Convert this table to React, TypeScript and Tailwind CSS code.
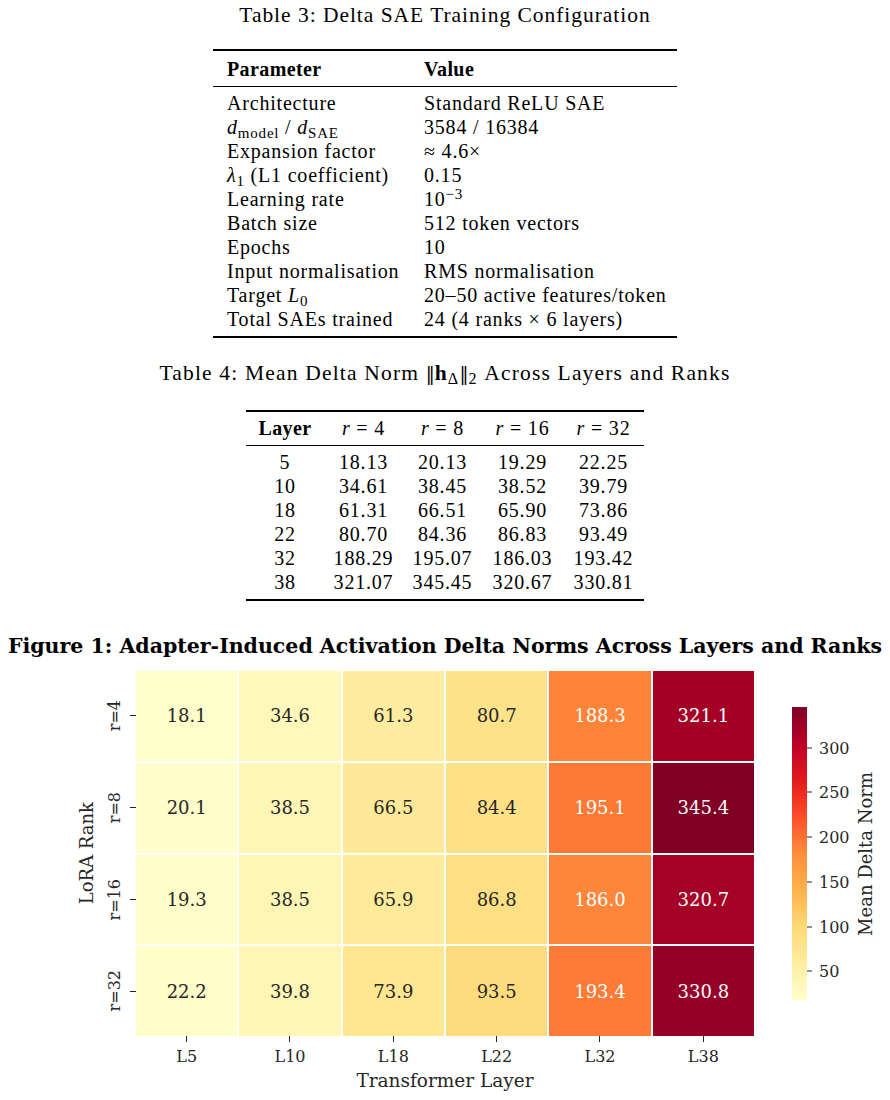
import React from 'react';

const YLORRD = ['#ffffcc', '#ffeda0', '#fed976', '#feb24c', '#fd8d3c', '#fc4e2a', '#e31a1c', '#bd0026', '#800026'];
const VMIN = 18.13;
const VMAX = 345.45;

const rgb = (h: string) => [1, 3, 5].map((i) => parseInt(h.slice(i, i + 2), 16));

const cmap = (v: number) => {
  const t = Math.min(1, Math.max(0, (v - VMIN) / (VMAX - VMIN)));
  const x = t * (YLORRD.length - 1);
  const i = Math.min(Math.floor(x), YLORRD.length - 2);
  const f = x - i;
  const a = rgb(YLORRD[i]);
  const b = rgb(YLORRD[i + 1]);
  const c = a.map((n, k) => Math.round(n + (b[k] - n) * f));
  return `rgb(${c[0]},${c[1]},${c[2]})`;
};

const config: [React.ReactNode, React.ReactNode][] = [
  ['Architecture', 'Standard ReLU SAE'],
  [
    <>
      <i>d</i>
      <sub>model</sub> / <i>d</i>
      <sub>SAE</sub>
    </>,
    '3584 / 16384',
  ],
  ['Expansion factor', '≈ 4.6×'],
  [
    <>
      <i>λ</i>
      <sub>1</sub> (L1 coefficient)
    </>,
    '0.15',
  ],
  [
    'Learning rate',
    <>
      10<sup>−3</sup>
    </>,
  ],
  ['Batch size', '512 token vectors'],
  ['Epochs', '10'],
  ['Input normalisation', 'RMS normalisation'],
  [
    <>
      Target <i>L</i>
      <sub>0</sub>
    </>,
    '20–50 active features/token',
  ],
  ['Total SAEs trained', '24 (4 ranks × 6 layers)'],
];

const norms = [
  ['5', '18.13', '20.13', '19.29', '22.25'],
  ['10', '34.61', '38.45', '38.52', '39.79'],
  ['18', '61.31', '66.51', '65.90', '73.86'],
  ['22', '80.70', '84.36', '86.83', '93.49'],
  ['32', '188.29', '195.07', '186.03', '193.42'],
  ['38', '321.07', '345.45', '320.67', '330.81'],
];

const ranks = ['4', '8', '16', '32'];
const layers = ['L5', 'L10', 'L18', 'L22', 'L32', 'L38'];

const heat: { v: number; label: string }[][] = [
  [[18.13, '18.1'], [34.61, '34.6'], [61.31, '61.3'], [80.7, '80.7'], [188.29, '188.3'], [321.07, '321.1']],
  [[20.13, '20.1'], [38.45, '38.5'], [66.51, '66.5'], [84.36, '84.4'], [195.07, '195.1'], [345.45, '345.4']],
  [[19.29, '19.3'], [38.52, '38.5'], [65.9, '65.9'], [86.83, '86.8'], [186.03, '186.0'], [320.67, '320.7']],
  [[22.25, '22.2'], [39.79, '39.8'], [73.86, '73.9'], [93.49, '93.5'], [193.42, '193.4'], [330.81, '330.8']],
].map((row) => row.map(([v, label]) => ({ v: v as number, label: label as string })));

const colWidths = ['w-[78px]', 'w-[79px]', 'w-[79px]', 'w-[81px]', 'w-[81px]'];

// double bar for the norm, Liberation Serif lacks a good one
const Bars = () => <span className="font-['DejaVu_Serif',serif] text-[18px] tracking-normal">‖</span>;

const Heatmap = () => (
  <div className="font-['DejaVu_Serif',serif] text-[#262626]">
    <div className="flex items-center pl-[76px]">
      <div className="[writing-mode:vertical-rl] rotate-180 text-[18px] leading-[22px]">LoRA Rank</div>
      <div className="ml-[6px] grid h-[365px] grid-rows-4 gap-[2px]">
        {ranks.map((r) => (
          <div key={r} className="flex items-center">
            <span className="[writing-mode:vertical-rl] rotate-180 text-[16px] leading-[22px]">r={r}</span>
            <span className="ml-[4px] h-px w-[6px] bg-[#262626]" />
          </div>
        ))}
      </div>
      <div className="grid h-[365px] w-[618px] grid-cols-6 grid-rows-4 gap-[2px] bg-white">
        {heat.flat().map((c, i) => (
          <div
            key={i}
            className={`flex items-center justify-center text-[18px] ${c.v > 150 ? 'text-white' : 'text-[#262626]'}`}
            style={{ backgroundColor: cmap(c.v) }}
          >
            {c.label}
          </div>
        ))}
      </div>
      <div className="ml-[38px] flex items-start">
        <div className="relative h-[293px] w-[15px] bg-[linear-gradient(to_top,#ffffcc,#ffeda0,#fed976,#feb24c,#fd8d3c,#fc4e2a,#e31a1c,#bd0026,#800026)]">
          {[50, 100, 150, 200, 250, 300].map((t) => (
            <div
              key={t}
              className="absolute left-[15px] flex -translate-y-1/2 items-center"
              style={{ top: `${((VMAX - t) / (VMAX - VMIN)) * 100}%` }}
            >
              <span className="h-px w-[5px] bg-[#262626]" />
              <span className="ml-[7px] text-[16px] leading-[19px]">{t}</span>
            </div>
          ))}
        </div>
        <div className="ml-[48px] self-center [writing-mode:vertical-rl] rotate-180 text-[18px] leading-[22px]">
          Mean Delta Norm
        </div>
      </div>
    </div>
    <div className="ml-[136px] grid w-[618px] grid-cols-6 gap-[2px]">
      {layers.map((l) => (
        <div key={l} className="flex flex-col items-center">
          <span className="h-[6px] w-px bg-[#262626]" />
          <span className="mt-[5px] text-[16px] leading-[19px]">{l}</span>
        </div>
      ))}
    </div>
    <div className="ml-[136px] mt-[4px] w-[618px] text-center text-[18.5px] leading-[22px]">Transformer Layer</div>
  </div>
);

export default function App() {
  return (
    <div className="h-[1100px] w-[890px] bg-white text-black">
      <div className="flex flex-col items-center font-['Liberation_Serif',serif] text-[20px] leading-[24px] tracking-[0.04em]">
        <p className="mt-[3px] text-[21.5px] tracking-[0.045em]">Table 3: Delta SAE Training Configuration</p>
        <div className="mt-[22px] w-[464px] border-y-2 border-black">
          <div className="grid grid-cols-[197px_1fr] border-b border-black px-[14px] pt-[6px] pb-[5px] font-bold tracking-[0.02em]">
            <span>Parameter</span>
            <span>Value</span>
          </div>
          <div className="grid grid-cols-[197px_1fr] px-[14px] pt-[4px] pb-[5px]">
            {config.map(([k, v], i) => (
              <React.Fragment key={i}>
                <span className="whitespace-nowrap">{k}</span>
                <span className="whitespace-nowrap">{v}</span>
              </React.Fragment>
            ))}
          </div>
        </div>

        <p className="mt-[23px] text-[21.5px] tracking-[0.055em]">
          Table 4: Mean Delta Norm <Bars />
          <b>h</b>
          <sub>Δ</sub>
          <Bars />
          <sub>2</sub> Across Layers and Ranks
        </p>
        <div className="mt-[24px] w-[398px] border-y-2 border-black">
          <div className="flex border-b border-black pt-[4px] pb-[5px]">
            <span className={`${colWidths[0]} flex justify-center font-bold tracking-[0.02em]`}>Layer</span>
            {['4', '8', '16', '32'].map((r, i) => (
              <span key={r} className={`${colWidths[i + 1]} flex justify-center`}>
                <i>r</i>&nbsp;=&nbsp;{r}
              </span>
            ))}
          </div>
          <div className="pt-[4px] pb-[5px]">
            {norms.map((row) => (
              <div key={row[0]} className="flex">
                {row.map((c, i) => (
                  <span key={i} className={`${colWidths[i]} flex justify-center`}>
                    {c}
                  </span>
                ))}
              </div>
            ))}
          </div>
        </div>
      </div>

      <h2 className="mt-[33px] text-center font-['DejaVu_Serif',serif] text-[20.5px] font-bold leading-[24px]">
        Figure 1: Adapter-Induced Activation Delta Norms Across Layers and Ranks
      </h2>
      <div className="mt-[13px]">
        <Heatmap />
      </div>
    </div>
  );
}
